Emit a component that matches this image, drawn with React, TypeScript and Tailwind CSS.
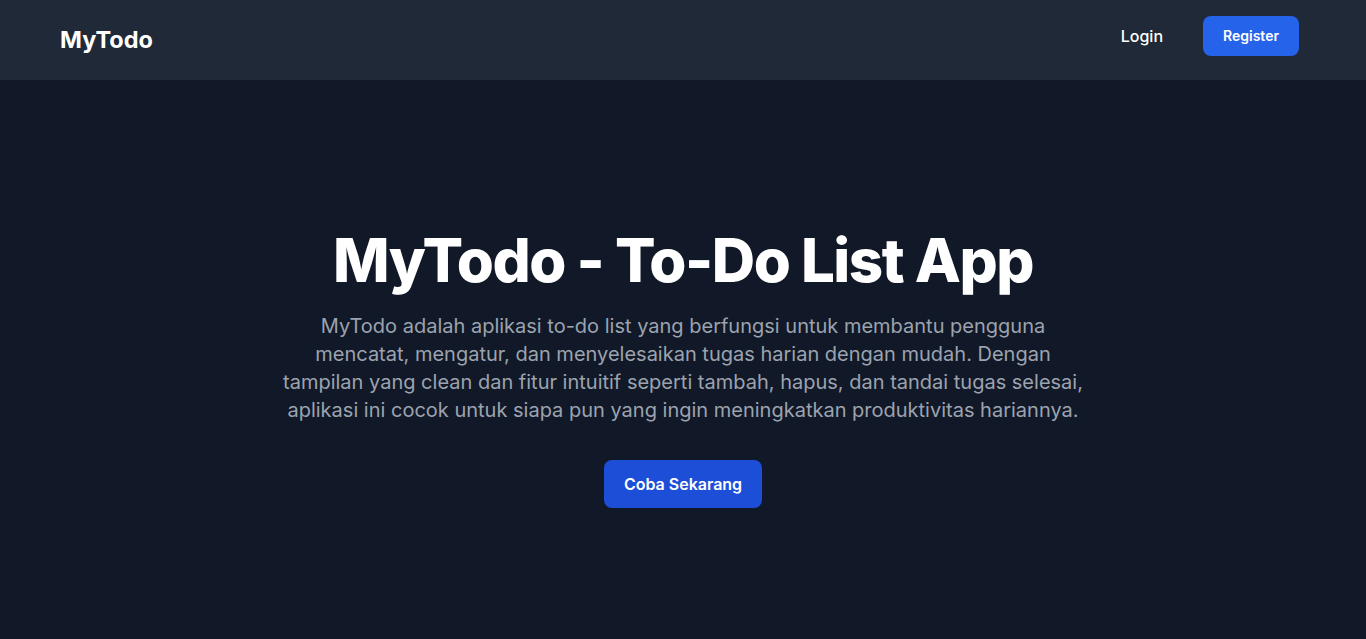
import React from "react";

export default function App() {
  return (
    <div className="min-h-screen flex flex-col bg-[#111827] text-white" style={{ fontFamily: "Inter, 'Noto Sans', sans-serif" }}>
      <header className="h-20 bg-[#1f2937] flex items-center justify-between pl-[60px] pr-[67px] shrink-0">
        <div className="text-[23.5px] font-bold text-white">MyTodo</div>
        <nav className="flex items-center gap-10 -mt-2">
          <a className="text-base font-medium text-white">Login</a>
          <a className="h-10 px-5 flex items-center rounded-lg bg-[#2563eb] text-sm font-semibold text-white">Register</a>
        </nav>
      </header>
      <main className="flex-1 flex flex-col items-center justify-center text-center px-4 pt-[18px]">
        <h1 className="text-6xl font-extrabold tracking-tight leading-none">MyTodo - To-Do List App</h1>
        <p className="mt-[22px] max-w-[810px] text-xl leading-7 text-[#9ca3af]">
          MyTodo adalah aplikasi to-do list yang berfungsi untuk membantu pengguna mencatat, mengatur, dan menyelesaikan tugas harian dengan mudah. Dengan tampilan yang clean dan fitur intuitif seperti tambah, hapus, dan tandai tugas selesai, aplikasi ini cocok untuk siapa pun yang ingin meningkatkan produktivitas hariannya.
        </p>
        <button className="mt-9 px-5 py-3 rounded-lg bg-[#1d4ed8] text-base font-semibold text-white">Coba Sekarang</button>
      </main>
    </div>
  );
}
